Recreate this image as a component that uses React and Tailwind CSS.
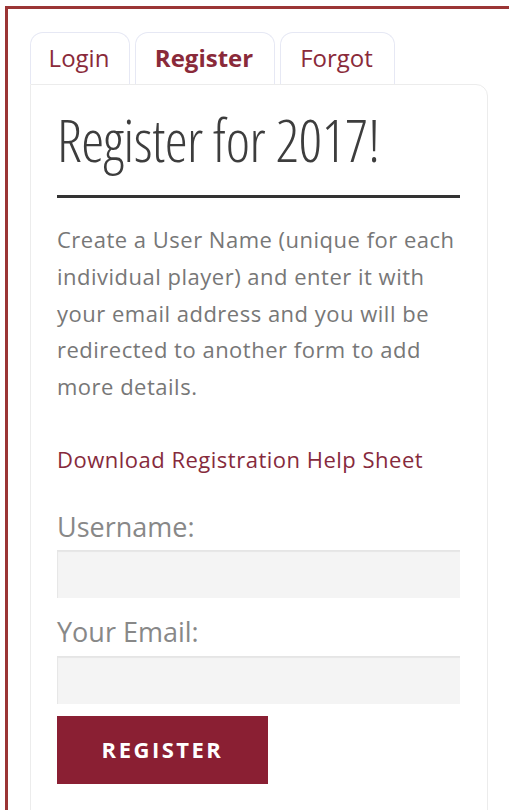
import React from "react";

const tabs = [
  { label: "Login", active: false, width: "w-[100px]" },
  { label: "Register", active: true, width: "w-[140px]" },
  { label: "Forgot", active: false, width: "w-[115px]" },
];

export default function App() {
  return (
    <div className="w-[509px] h-[810px] overflow-hidden bg-white font-['Open_Sans',sans-serif]">
      <div className="pt-[6px] pl-[5px]">
        <div className="w-[560px] h-[900px] border-l-[3px] border-t-[3px] border-[#9b3535] pl-[22px] pt-[23px]">
          {/* tab strip */}
          <div className="flex gap-[5px] h-[52px]">
            {tabs.map((t) => (
              <div
                key={t.label}
                className={`${t.width} flex items-center justify-center pb-[2px] pr-[2px] rounded-t-[13px] border border-b-0 border-[#e6e8f4] text-[24px] text-[#8a2a3a] ${
                  t.active ? "font-bold" : "font-normal"
                }`}
              >
                {t.label}
              </div>
            ))}
          </div>

          {/* panel */}
          <div className="w-[458px] h-[760px] border border-[#ececec] rounded-tr-[12px] pl-[26px] pr-[27px] pt-[20px]">
            <h1 className="text-[58px] leading-[70px] font-light [font-stretch:75%] text-[#3d3d3d] tracking-[-0.5px]">
              Register for 2017!
            </h1>
            <div className="mt-[20px] h-[3px] bg-[#333333]" />
            <p className="mt-[23px] text-[22px] leading-[36.75px] tracking-[0.5px] text-[#777777]">
              Create a User Name (unique for each individual player) and enter
              it with your email address and you will be redirected to another
              form to add more details.
            </p>
            <a className="block mt-[36px] text-[22px] leading-[36px] tracking-[0.5px] text-[#862a3c]">
              Download Registration Help Sheet
            </a>
            <label className="block mt-[34px] text-[27px] leading-[32px] text-[#888888]">
              Username:
            </label>
            <div className="mt-[7px] h-[48px] bg-[#f4f4f4] shadow-[inset_1px_2px_1px_rgba(0,0,0,0.06)]" />
            <label className="block mt-[18px] text-[27px] leading-[32px] text-[#888888]">
              Your Email:
            </label>
            <div className="mt-[8px] h-[48px] bg-[#f4f4f4] shadow-[inset_1px_2px_1px_rgba(0,0,0,0.06)]" />
            <button className="block mt-[12px] w-[211px] h-[68px] bg-[#8a1f33] text-white font-bold text-[22px] tracking-[2.5px]">
              REGISTER
            </button>
          </div>
        </div>
      </div>
    </div>
  );
}
